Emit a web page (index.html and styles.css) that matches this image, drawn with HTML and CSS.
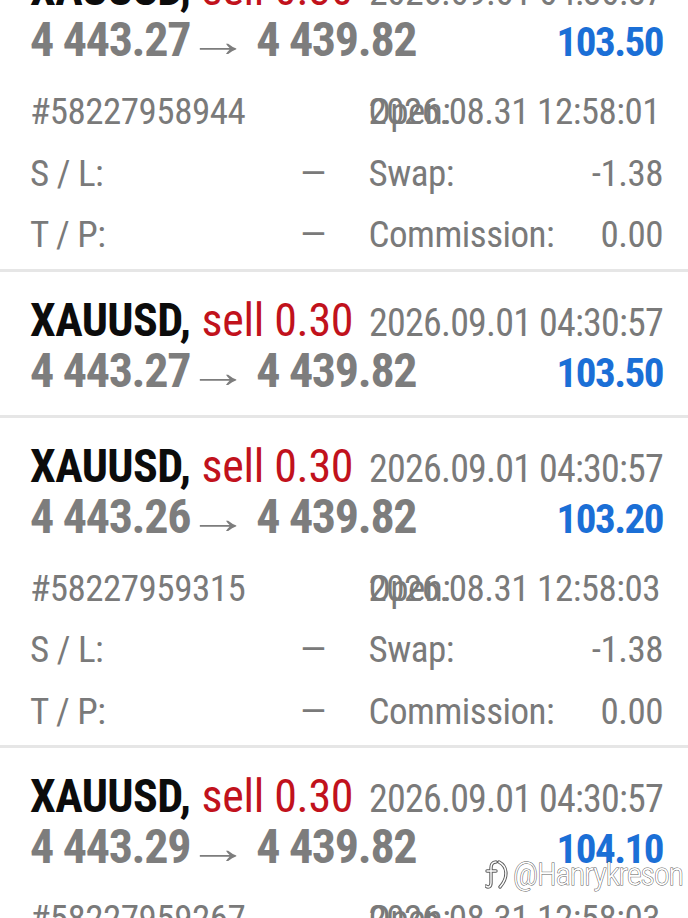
FILE: index.html
```html
<!DOCTYPE html>
<html lang="en">
<head>
<meta charset="utf-8">
<title>Trade history</title>
<link rel="stylesheet" href="styles.css">
</head>
<body>
<div class="screen">
  <div class="list">
    <div class="order expanded">
      <div class="head"><span class="sym">XAUUSD,</span><span class="type">sell 0.30</span><span class="time">2026.09.01 04:30:57</span></div>
      <div class="prices"><span class="pr">4 443.27<span class="arrow">→</span>4 439.82</span><span class="profit">103.50</span></div>
      <div class="details">
        <div class="cell"><span class="val">#58227958944</span></div>
        <div class="cell stack"><span class="lbl">Open:</span><span class="val">2026.08.31 12:58:01</span></div>
        <div class="cell"><span class="lbl">S / L:</span><span class="dash">–</span></div>
        <div class="cell"><span class="lbl">Swap:</span><span class="val">-1.38</span></div>
        <div class="cell"><span class="lbl">T / P:</span><span class="dash">–</span></div>
        <div class="cell"><span class="lbl">Commission:</span><span class="val">0.00</span></div>
      </div>
    </div>
    <div class="order collapsed">
      <div class="head"><span class="sym">XAUUSD,</span><span class="type">sell 0.30</span><span class="time">2026.09.01 04:30:57</span></div>
      <div class="prices"><span class="pr">4 443.27<span class="arrow">→</span>4 439.82</span><span class="profit">103.50</span></div>
    </div>
    <div class="order expanded">
      <div class="head"><span class="sym">XAUUSD,</span><span class="type">sell 0.30</span><span class="time">2026.09.01 04:30:57</span></div>
      <div class="prices"><span class="pr">4 443.26<span class="arrow">→</span>4 439.82</span><span class="profit">103.20</span></div>
      <div class="details">
        <div class="cell"><span class="val">#58227959315</span></div>
        <div class="cell stack"><span class="lbl">Open:</span><span class="val">2026.08.31 12:58:03</span></div>
        <div class="cell"><span class="lbl">S / L:</span><span class="dash">–</span></div>
        <div class="cell"><span class="lbl">Swap:</span><span class="val">-1.38</span></div>
        <div class="cell"><span class="lbl">T / P:</span><span class="dash">–</span></div>
        <div class="cell"><span class="lbl">Commission:</span><span class="val">0.00</span></div>
      </div>
    </div>
    <div class="order expanded">
      <div class="head"><span class="sym">XAUUSD,</span><span class="type">sell 0.30</span><span class="time">2026.09.01 04:30:57</span></div>
      <div class="prices"><span class="pr">4 443.29<span class="arrow">→</span>4 439.82</span><span class="profit">104.10</span></div>
      <div class="details">
        <div class="cell"><span class="val">#58227959267</span></div>
        <div class="cell stack"><span class="lbl">Open:</span><span class="val">2026.08.31 12:58:03</span></div>
        <div class="cell"><span class="lbl">S / L:</span><span class="dash">–</span></div>
        <div class="cell"><span class="lbl">Swap:</span><span class="val">-1.38</span></div>
      </div>
    </div>
  </div>
  <div class="watermark">
    <svg class="wm-logo" width="26" height="32" viewBox="0 0 26 32" aria-hidden="true">
      <g fill="none" stroke-linecap="round" stroke-linejoin="round">
        <path class="wm-out" d="M11 4 C7 4 6 7 6 10 L6 25 C6 29 3 30 1 28 M2 13 L11 13 M14 4 C22 8 24 19 15 29"/>
        <path class="wm-in" d="M11 4 C7 4 6 7 6 10 L6 25 C6 29 3 30 1 28 M2 13 L11 13 M14 4 C22 8 24 19 15 29"/>
      </g>
    </svg>
    <span class="wm-text">@Hanrykreson</span>
  </div>
</div>
</body>
</html>
```
FILE: styles.css
```css
html, body {
  margin: 0;
  padding: 0;
  background: #ffffff;
}

.screen {
  position: relative;
  width: 688px;
  height: 918px;
  overflow: hidden;
  font-family: "Roboto Condensed", Roboto, "Liberation Sans Narrow", sans-serif;
}

.list {
  margin-top: -59px;
}

.order {
  padding: 22px 25px 0 30px;
  border-bottom: 3px solid #e6e6e6;
}

.order.collapsed {
  padding-bottom: 19px;
}

.order.expanded {
  padding-bottom: 3px;
}

.head {
  display: flex;
  align-items: baseline;
  height: 52px;
  line-height: 52px;
  white-space: nowrap;
}

.sym {
  font-size: 46px;
  font-weight: 700;
  color: #0c0c0c;
  letter-spacing: -0.6px;
}

.type {
  font-size: 46px;
  font-weight: 400;
  color: #c1121c;
  margin-left: 11px;
  letter-spacing: -0.3px;
}

.time {
  margin-left: auto;
  font-size: 38px;
  color: #7a7a7a;
  letter-spacing: -0.8px;
}

.prices {
  display: flex;
  align-items: baseline;
  justify-content: space-between;
  height: 50px;
  line-height: 50px;
  white-space: nowrap;
}

.pr {
  font-size: 48px;
  font-weight: 700;
  color: #7d7d7d;
  letter-spacing: -1.3px;
}

.arrow {
  display: inline-block;
  font-weight: 400;
  font-size: 44px;
  letter-spacing: 0;
  margin: 0 16px 0 6px;
  transform: scaleX(1.4);
  transform-origin: center center;
}

.profit {
  font-size: 41px;
  font-weight: 700;
  color: #1b6fd6;
  letter-spacing: -1.5px;
}

.details {
  display: grid;
  grid-template-columns: 1fr 1fr;
  column-gap: 44px;
  grid-auto-rows: 61.5px;
  margin-top: 16px;
  font-size: 37px;
  color: #7a7a7a;
  letter-spacing: -0.5px;
  white-space: nowrap;
}

.cell {
  display: flex;
  align-items: center;
  justify-content: space-between;
}

.dash {
  display: inline-block;
  transform: scaleX(1.4);
  transform-origin: right center;
  margin-right: -3px;
}

.cell.stack {
  display: grid;
  align-items: center;
}

.cell.stack > span {
  grid-area: 1 / 1;
}

.cell.stack .lbl {
  justify-self: start;
}

.cell.stack .val {
  justify-self: end;
}

.watermark {
  position: absolute;
  right: 5px;
  top: 855px;
  display: flex;
  align-items: center;
  gap: 2px;
}

.wm-text {
  font-family: "Roboto Condensed", Roboto, sans-serif;
  font-weight: 300;
  font-size: 32px;
  letter-spacing: -1px;
  color: #ffffff;
  -webkit-text-stroke: 1px #5e5e5e;
  paint-order: stroke fill;
}

.wm-out {
  stroke: #5e5e5e;
  stroke-width: 3.4;
}

.wm-in {
  stroke: #ffffff;
  stroke-width: 1.4;
}
```
